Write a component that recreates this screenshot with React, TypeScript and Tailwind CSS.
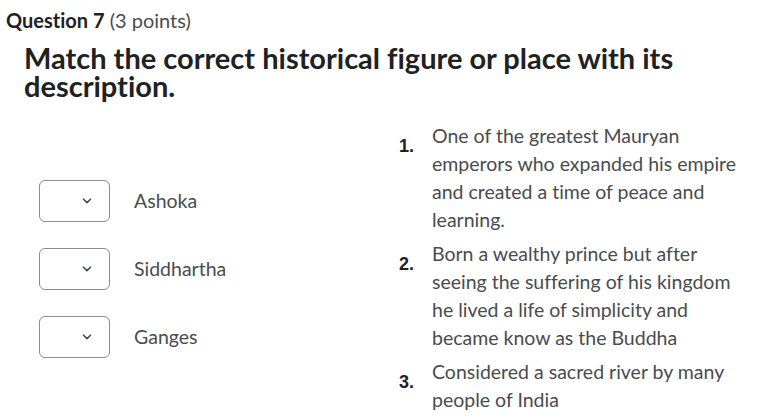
const items = [
  { n: "1.", text: "One of the greatest Mauryan emperors who expanded his empire and created a time of peace and learning." },
  { n: "2.", text: "Born a wealthy prince but after seeing the suffering of his kingdom he lived a life of simplicity and became know as the Buddha" },
  { n: "3.", text: "Considered a sacred river by many people of India" },
];

const choices = ["Ashoka", "Siddhartha", "Ganges"];

const Chevron = () => (
  <svg width="10" height="6" viewBox="0 0 10 6" fill="none">
    <path d="M1.5 1.2 L5 4.6 L8.5 1.2" stroke="#494c4e" strokeWidth="1.6" strokeLinecap="round" strokeLinejoin="round" />
  </svg>
);

const App = () => {
  return (
    <div
      className="w-[759px] h-[418px] bg-white overflow-hidden text-[#494c4e] [font-variant-ligatures:none]"
      style={{ fontFamily: "Lato, 'Noto Sans', sans-serif" }}
    >
      <div className="pl-[6px] pt-[8px] text-[20px] leading-[24px] text-[#202122]">
        <span className="font-bold">Question 7</span> <span className="text-[#494c4e]">(3 points)</span>
      </div>

      <h1 className="pl-[24px] pt-[12px] pr-[60px] text-[29px] leading-[28px] font-bold text-[#202122]">
        Match the correct historical figure or place with its description.
      </h1>

      <div className="flex mt-[22px]">
        <div className="w-[399px] flex flex-col gap-[26px] pt-[58px] pl-[39px]">
          {choices.map((c) => (
            <div key={c} className="flex items-center h-[42px]">
              <div className="w-[71px] h-[42px] border border-[#8a8c8e] rounded-[6px] flex items-center justify-end pr-[17px]">
                <Chevron />
              </div>
              <span className="ml-[24px] text-[19.5px]">{c}</span>
            </div>
          ))}
        </div>

        <div className="flex flex-col gap-[6px] w-[345px]">
          {items.map((it) => (
            <div key={it.n} className="flex">
              <span
                className="w-[33px] pt-[10px] text-[18px] leading-[28px] font-semibold text-[#202122]"
                style={{ fontFamily: "'Liberation Sans', Arial, sans-serif" }}
              >
                {it.n}
              </span>
              <p className="flex-1 text-[19.5px] leading-[28px]">{it.text}</p>
            </div>
          ))}
        </div>
      </div>
    </div>
  );
};

export default App;
